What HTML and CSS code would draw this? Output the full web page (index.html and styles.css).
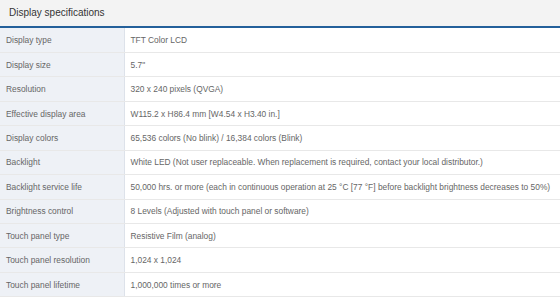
FILE: index.html
```html
<!DOCTYPE html>
<html>
<head>
<meta charset="utf-8">
<link rel="stylesheet" href="styles.css">
</head>
<body>
<div class="spec">
  <div class="spec-title">Display specifications</div>
  <table class="spec-table">
    <colgroup><col class="col-label"><col class="col-value"></colgroup>
    <tr><th>Display type</th><td>TFT Color LCD</td></tr>
    <tr><th>Display size</th><td>5.7"</td></tr>
    <tr><th>Resolution</th><td>320 x 240 pixels (QVGA)</td></tr>
    <tr><th>Effective display area</th><td>W115.2 x H86.4 mm [W4.54 x H3.40 in.]</td></tr>
    <tr><th>Display colors</th><td>65,536 colors (No blink) / 16,384 colors (Blink)</td></tr>
    <tr><th>Backlight</th><td>White LED (Not user replaceable. When replacement is required, contact your local distributor.)</td></tr>
    <tr><th>Backlight service life</th><td>50,000 hrs. or more (each in continuous operation at 25 °C [77 °F] before backlight brightness decreases to 50%)</td></tr>
    <tr><th>Brightness control</th><td>8 Levels (Adjusted with touch panel or software)</td></tr>
    <tr><th>Touch panel type</th><td>Resistive Film (analog)</td></tr>
    <tr><th>Touch panel resolution</th><td>1,024 x 1,024</td></tr>
    <tr><th>Touch panel lifetime</th><td>1,000,000 times or more</td></tr>
  </table>
</div>
</body>
</html>
```

FILE: styles.css
```css
html, body {
  margin: 0;
  padding: 0;
  background: #ffffff;
}
body {
  font-family: "Liberation Sans", Arial, sans-serif;
  width: 560px;
  height: 297px;
  overflow: hidden;
}
.spec-title {
  background: #f3f3f3;
  height: 28px;
  box-sizing: border-box;
  padding-left: 9px;
  font-size: 10px;
  line-height: 26px;
  color: #333;
  border-bottom: 2px solid #24609a;
}
.spec-table {
  width: 100%;
  table-layout: fixed;
  border-collapse: collapse;
  font-size: 8.4px;
  color: #666;
}
.col-label {
  width: 124px;
}
.spec-table tr {
  height: 24.45px;
}
.spec-table th,
.spec-table td {
  text-align: left;
  font-weight: normal;
  border-bottom: 1px solid #e8e8e8;
  white-space: nowrap;
  overflow: hidden;
}
.spec-table th {
  background: #eef1f6;
  border-right: 1px solid #dde2ea;
  padding: 0 0 0 6px;
}
.spec-table td {
  padding: 0 0 0 6px;
}
```
